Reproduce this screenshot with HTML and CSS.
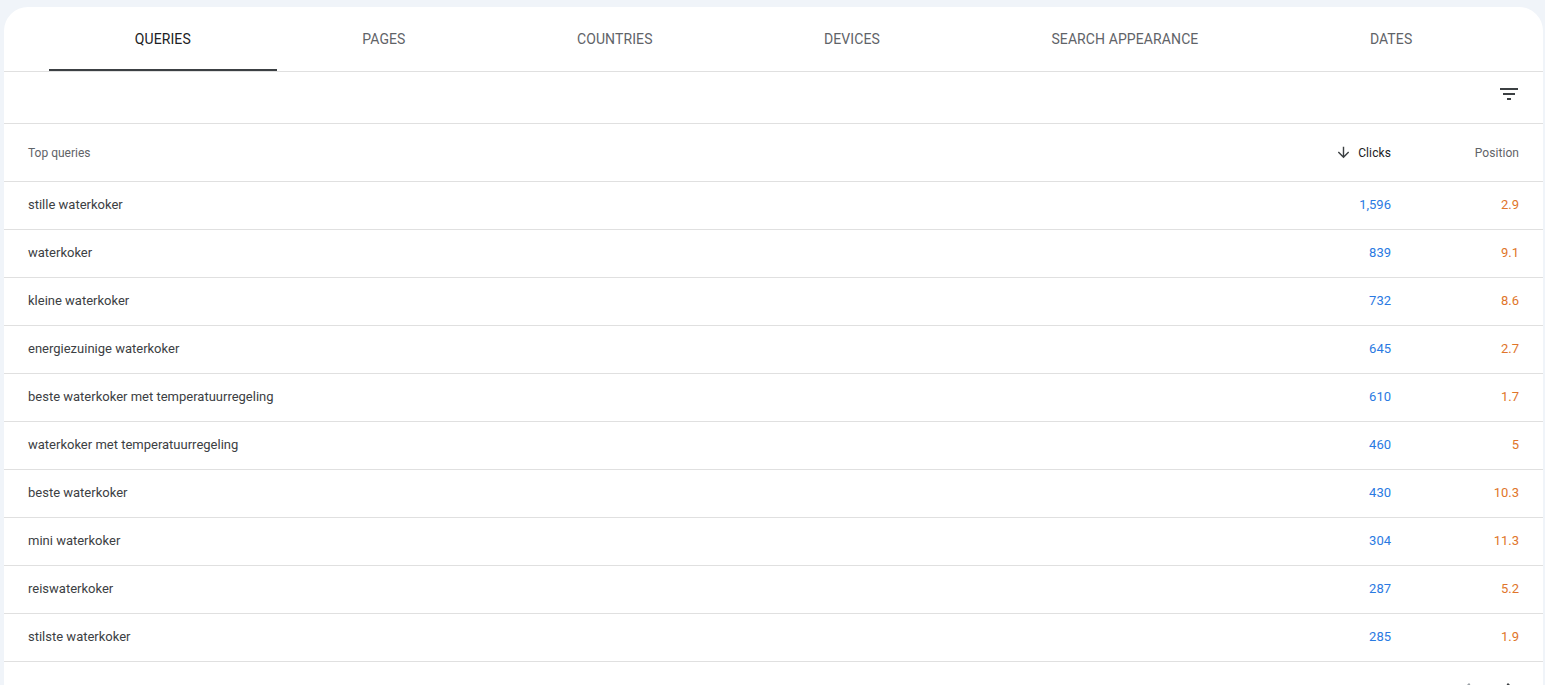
FILE: index.html
```html
<!DOCTYPE html>
<html lang="en">
<head>
<meta charset="utf-8">
<title>Top queries</title>
<link rel="stylesheet" href="styles.css">
</head>
<body>
<main class="card">
  <nav class="tabs">
    <div class="tab active">QUERIES</div>
    <div class="tab">PAGES</div>
    <div class="tab">COUNTRIES</div>
    <div class="tab">DEVICES</div>
    <div class="tab">SEARCH APPEARANCE</div>
    <div class="tab">DATES</div>
  </nav>
  <div class="toolbar">
    <svg class="filter" width="24" height="24" viewBox="0 0 24 24"><path d="M10 18h4v-2h-4v2zM3 6v2h18V6H3zm3 7h12v-2H6v2z"/></svg>
  </div>
  <div class="row head">
    <div class="name">Top queries</div>
    <div class="clicks sorted">
      <svg class="arrow" width="17" height="17" viewBox="0 0 24 24"><path d="M20 12l-1.41-1.41L13 16.17V4h-2v12.17l-5.58-5.59L4 12l8 8 8-8z"/></svg>
      Clicks
    </div>
    <div class="position">Position</div>
  </div>
  <div class="row"><div class="name">stille waterkoker</div><div class="clicks">1,596</div><div class="position">2.9</div></div>
  <div class="row"><div class="name">waterkoker</div><div class="clicks">839</div><div class="position">9.1</div></div>
  <div class="row"><div class="name">kleine waterkoker</div><div class="clicks">732</div><div class="position">8.6</div></div>
  <div class="row"><div class="name">energiezuinige waterkoker</div><div class="clicks">645</div><div class="position">2.7</div></div>
  <div class="row"><div class="name">beste waterkoker met temperatuurregeling</div><div class="clicks">610</div><div class="position">1.7</div></div>
  <div class="row"><div class="name">waterkoker met temperatuurregeling</div><div class="clicks">460</div><div class="position">5</div></div>
  <div class="row"><div class="name">beste waterkoker</div><div class="clicks">430</div><div class="position">10.3</div></div>
  <div class="row"><div class="name">mini waterkoker</div><div class="clicks">304</div><div class="position">11.3</div></div>
  <div class="row"><div class="name">reiswaterkoker</div><div class="clicks">287</div><div class="position">5.2</div></div>
  <div class="row"><div class="name">stilste waterkoker</div><div class="clicks">285</div><div class="position">1.9</div></div>
  <div class="pager">
    <svg class="page-prev" width="24" height="24" viewBox="0 0 24 24"><path d="M15.41 7.41L14 6l-6 6 6 6 1.41-1.41L10.83 12z"/></svg>
    <svg class="page-next" width="24" height="24" viewBox="0 0 24 24"><path d="M10 6L8.59 7.41 13.17 12l-4.58 4.58L10 18l6-6z"/></svg>
  </div>
</main>
</body>
</html>
```

FILE: styles.css
```css
html, body {
  margin: 0;
  height: 100%;
  overflow: hidden;
}

body {
  background: #f0f4f9;
  padding: 7px 2px 0 4px;
  box-sizing: border-box;
  font-family: Roboto, "Liberation Sans", sans-serif;
  color: #3c4043;
}

.card {
  background: #fff;
  border-radius: 24px 24px 0 0;
  height: 100%;
  overflow: hidden;
}

.tabs {
  display: flex;
  height: 64px;
  padding: 0 45px;
  border-bottom: 1px solid #e0e0e0;
}

.tab {
  flex: 1 1 auto;
  padding: 0 20px 1px;
  display: flex;
  align-items: center;
  justify-content: center;
  font-size: 14px;
  font-weight: 400;
  letter-spacing: 0.1px;
  color: #5f6368;
  box-sizing: border-box;
}

.tab.active {
  color: #202124;
  box-shadow: inset 0 -2px 0 #3c4043;
}

.toolbar {
  display: flex;
  align-items: center;
  justify-content: flex-end;
  padding: 0 22px 7px 0;
  box-sizing: border-box;
  height: 52px;
  border-bottom: 1px solid #e0e0e0;
}

.filter {
  fill: #3c4043;
}

.row {
  display: flex;
  align-items: center;
  height: 48px;
  box-sizing: border-box;
  padding: 0 24px 2px;
  border-bottom: 1px solid #e0e0e0;
  font-size: 13px;
  color: #3c4043;
}

.row.head {
  height: 58px;
  padding-bottom: 0;
  font-size: 12px;
  color: #5f6368;
}

.name {
  flex: 1;
}

.clicks {
  width: 200px;
  display: flex;
  align-items: center;
  justify-content: flex-end;
  color: #2a7ae2;
}

.position {
  width: 128px;
  text-align: right;
  color: #e0752a;
}

.head .position {
  color: #5f6368;
  letter-spacing: 0.05px;
}

.clicks.sorted {
  color: #202124;
  letter-spacing: 0.1px;
}

.arrow {
  margin-right: 6px;
  fill: #3c4043;
}

.pager {
  height: 30px;
  display: flex;
  justify-content: flex-end;
  gap: 19px;
  padding: 15px 21px 0 0;
}

.page-prev {
  fill: #9aa0a6;
}

.page-next {
  fill: #3c4043;
}
```
